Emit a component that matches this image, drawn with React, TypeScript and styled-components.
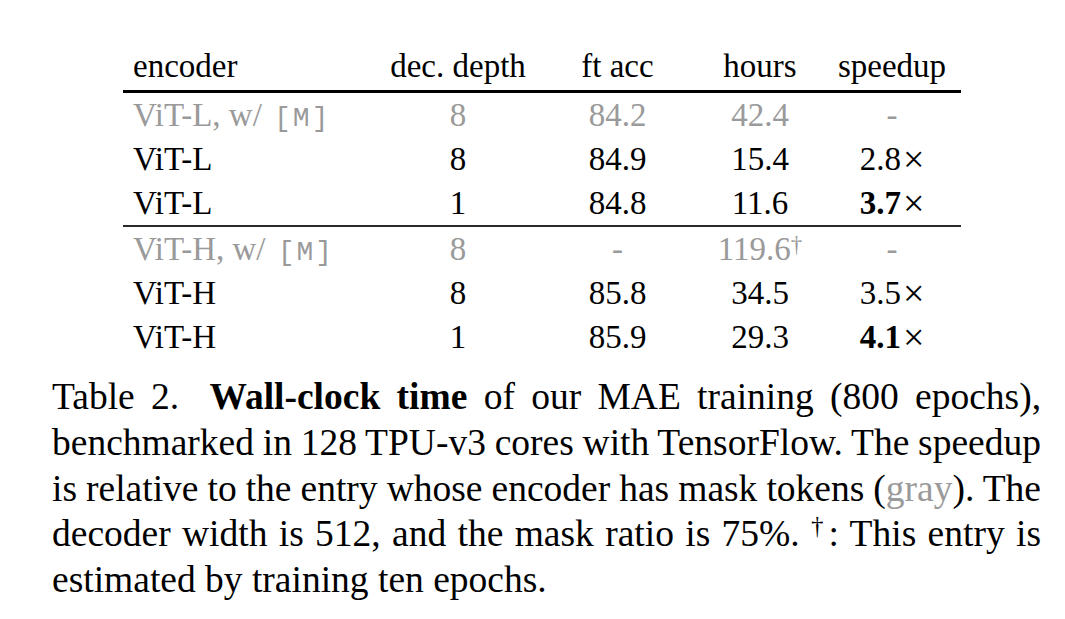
import React from "react";
import styled, { createGlobalStyle } from "styled-components";

const Global = createGlobalStyle`
  html, body { margin: 0; padding: 0; background: #ffffff; }
  body {
    font-family: "Liberation Serif", "Times New Roman", serif;
    color: #000000;
  }
`;

const MUTED = "#9a9a9a";

const Page = styled.div`
  width: 1065px;
  height: 619px;
  box-sizing: border-box;
  padding: 44px 0 0 52px;
  display: flex;
  flex-direction: column;
  align-items: flex-start;
  overflow: hidden;
`;

const Table = styled.div`
  margin-left: 71px;
  width: 838px;
  display: flex;
  flex-direction: column;
  font-size: 33px;
`;

const Row = styled.div<{ $head?: boolean }>`
  display: grid;
  grid-template-columns: 255px 160px 159px 126px 138px;
  height: 44px;
  line-height: 44px;
  padding-bottom: ${(p) => (p.$head ? "2px" : "0")};
`;

const Rule = styled.div<{ $thick?: boolean }>`
  height: ${(p) => (p.$thick ? "3px" : "2px")};
  background: ${(p) => (p.$thick ? "#000" : "#2a2a2a")};
`;

const Cell = styled.div<{ $left?: boolean; $muted?: boolean }>`
  white-space: nowrap;
  text-align: ${(p) => (p.$left ? "left" : "center")};
  padding-left: ${(p) => (p.$left ? "10px" : "0")};
  color: ${(p) => (p.$muted ? MUTED : "#000")};
`;

const Mask = styled.span`
  font-family: "Liberation Mono", "Courier New", monospace;
  font-size: 28px;
  letter-spacing: 2px;
  margin-left: 4px;
`;

const Dagger = styled.sup`
  font-size: 23px;
  line-height: 0;
  vertical-align: 8px;
`;

const Times = styled.span`
  font-size: 38px;
  line-height: 0;
  vertical-align: -2px;
  margin-left: 2px;
`;

const Bold = styled.b`
  font-weight: 700;
`;

const Caption = styled.div`
  margin-top: 15px;
  width: 989px;
  font-size: 37.5px;
  line-height: 45.8px;
`;

const CaptionLine = styled.div<{ $last?: boolean }>`
  white-space: nowrap;
  text-align: ${(p) => (p.$last ? "left" : "justify")};
  text-align-last: ${(p) => (p.$last ? "left" : "justify")};
  word-spacing: ${(p) => (p.$last ? "normal" : "-3px")};
`;

const Label = styled.span`
  margin-right: 14px;
`;

const Gray = styled.span`
  color: ${MUTED};
`;

const CapDagger = styled.sup`
  font-size: 25px;
  line-height: 0;
  vertical-align: 12px;
`;

type Data = {
  enc: React.ReactNode;
  depth: string;
  acc: string;
  hours: React.ReactNode;
  speed: React.ReactNode;
  muted?: boolean;
};

const speed = (v: string, bold?: boolean) => (
  <>
    {bold ? <Bold>{v}</Bold> : v}
    <Times>×</Times>
  </>
);

const groupL: Data[] = [
  {
    enc: (
      <>
        ViT-L, w/ <Mask>[M]</Mask>
      </>
    ),
    depth: "8",
    acc: "84.2",
    hours: "42.4",
    speed: "-",
    muted: true,
  },
  { enc: "ViT-L", depth: "8", acc: "84.9", hours: "15.4", speed: speed("2.8") },
  { enc: "ViT-L", depth: "1", acc: "84.8", hours: "11.6", speed: speed("3.7", true) },
];

const groupH: Data[] = [
  {
    enc: (
      <>
        ViT-H, w/ <Mask>[M]</Mask>
      </>
    ),
    depth: "8",
    acc: "-",
    hours: (
      <>
        119.6<Dagger>†</Dagger>
      </>
    ),
    speed: "-",
    muted: true,
  },
  { enc: "ViT-H", depth: "8", acc: "85.8", hours: "34.5", speed: speed("3.5") },
  { enc: "ViT-H", depth: "1", acc: "85.9", hours: "29.3", speed: speed("4.1", true) },
];

const DataRow = ({ d }: { d: Data }) => (
  <Row>
    <Cell $left $muted={d.muted}>{d.enc}</Cell>
    <Cell $muted={d.muted}>{d.depth}</Cell>
    <Cell $muted={d.muted}>{d.acc}</Cell>
    <Cell $muted={d.muted}>{d.hours}</Cell>
    <Cell $muted={d.muted}>{d.speed}</Cell>
  </Row>
);

export default function App() {
  return (
    <>
      <Global />
      <Page>
        <Table>
          <Row $head>
            <Cell $left>encoder</Cell>
            <Cell>dec. depth</Cell>
            <Cell>ft acc</Cell>
            <Cell>hours</Cell>
            <Cell>speedup</Cell>
          </Row>
          <Rule $thick />
          {groupL.map((d, i) => (
            <DataRow key={`l${i}`} d={d} />
          ))}
          <Rule />
          {groupH.map((d, i) => (
            <DataRow key={`h${i}`} d={d} />
          ))}
        </Table>
        <Caption>
          <CaptionLine>
            <Label>Table 2.</Label> <Bold>Wall-clock time</Bold> of our MAE training (800 epochs),
          </CaptionLine>
          <CaptionLine>
            benchmarked in 128 TPU-v3 cores with TensorFlow. The speedup
          </CaptionLine>
          <CaptionLine>
            is relative to the entry whose encoder has mask tokens (<Gray>gray</Gray>). The
          </CaptionLine>
          <CaptionLine>
            decoder width is 512, and the mask ratio is 75%. <CapDagger>†</CapDagger>: This entry is
          </CaptionLine>
          <CaptionLine $last>estimated by training ten epochs.</CaptionLine>
        </Caption>
      </Page>
    </>
  );
}
